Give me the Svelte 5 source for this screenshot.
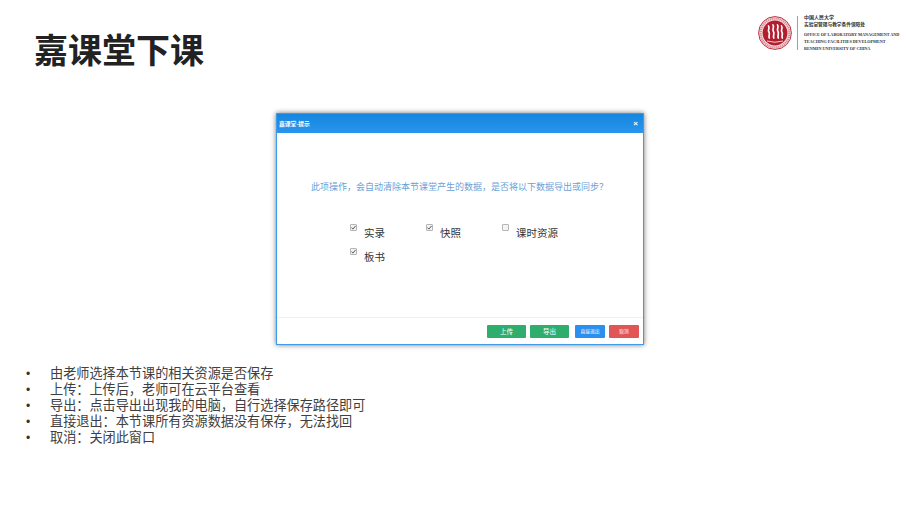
<script>
  const options = [
    { name: '实录', checked: true },
    { name: '快照', checked: true },
    { name: '课时资源', checked: false },
    { name: '板书', checked: true },
  ]

  const notes = [
    '由老师选择本节课的相关资源是否保存',
    '上传：上传后，老师可在云平台查看',
    '导出：点击导出出现我的电脑，自行选择保存路径即可',
    '直接退出：本节课所有资源数据没有保存，无法找回',
    '取消：关闭此窗口',
  ]
</script>

<main class="slide">
  <header class="top">
    <h1>嘉课堂下课</h1>
    <div class="logo">
      <svg class="seal" width="34" height="34" viewBox="0 0 34 34" aria-hidden="true">
        <circle cx="17" cy="17" r="16.4" fill="#f3dfe0" stroke="#c4303f" stroke-width="1" />
        <circle cx="17" cy="17" r="14.4" fill="none" stroke="#d88a92" stroke-width="2.2" stroke-dasharray="1.2 0.8" />
        <circle cx="17" cy="17" r="12.400" fill="#b01e30" />
        <path d="M10.500 10c1.800 2 -1.200 3.800 .4 6s-.8 3.400 .4 6M15 9c1.800 2 -1.200 4 .4 6.500s-.8 3.600 .4 6.500M19.500 9c1.800 2 -1.200 4 .4 6.500s-.8 3.600 .4 6.500M23.500 10c1.800 2 -1.200 3.800 .4 6s-.8 3.400 .4 6" fill="none" stroke="#fff" stroke-width="1.700" stroke-linecap="round" />
        <path d="M9 25q8 2.500 16 0" fill="none" stroke="#fff" stroke-width="0.800" />
      </svg>
      <div class="rule"></div>
      <div class="logo-text">
        <div class="cn1">中国人民大学</div>
        <div class="cn2">实验室管理与教学条件保障处</div>
        <div class="en">
          <div>OFFICE OF LABORATORY MANAGEMENT AND</div>
          <div>TEACHING FACILITIES DEVELOPMENT</div>
          <div>RENMIN UNIVERSITY OF CHINA</div>
        </div>
      </div>
    </div>
  </header>

  <section class="dialog">
    <div class="dialog-head">
      <span>嘉课堂-提示</span>
      <span class="close">×</span>
    </div>
    <div class="dialog-body">
      <p class="question">此项操作，会自动清除本节课堂产生的数据，是否将以下数据导出或同步？</p>
      <div class="options">
        {#each options as opt}
          <div class="option">
            <span class="box">
              {#if opt.checked}
                <svg width="7" height="7" viewBox="0 0 7 7" aria-hidden="true">
                  <path d="M1.500 3.600l1.400 1.500 2.700-3.200" fill="none" stroke="#555" stroke-width="1" />
                </svg>
              {/if}
            </span>
            <span class="label">{opt.name}</span>
          </div>
        {/each}
      </div>
    </div>
    <div class="dialog-foot">
      <button class="btn green">上传</button>
      <button class="btn green">导出</button>
      <button class="btn blue small">直接退出</button>
      <button class="btn red small">取消</button>
    </div>
  </section>

  <ul class="notes">
    {#each notes as note}
      <li>{note}</li>
    {/each}
  </ul>
</main>

<style>
  :global(body) {
    margin: 0;
    background: #fff;
  }

  .slide {
    width: 907px;
    height: 510px;
    overflow: hidden;
    font-family: "Liberation Sans", "Noto Sans CJK SC", sans-serif;
    color: #404040;
  }

  .top {
    display: flex;
    justify-content: space-between;
    align-items: flex-start;
    height: 113px;
    padding: 0 7px 0 35px;
    box-sizing: border-box;
  }

  h1 {
    margin: 29px 0 0 -1px;
    font-size: 34px;
    line-height: 40px;
    font-weight: 700;
    color: #222;
    font-family: "Noto Sans CJK SC", sans-serif;
  }

  .logo {
    display: flex;
    align-items: center;
    margin-top: 14px;
  }

  .seal {
    margin: 0 5px 0 0;
  }

  .rule {
    width: 1px;
    height: 34px;
    background: #c98a90;
    margin-right: 6px;
  }

  .logo-text {
    color: #333;
    width: 96px;
  }

  .cn1 {
    font-size: 5px;
    line-height: 7px;
    font-weight: 700;
  }

  .cn2 {
    font-size: 4.700px;
    line-height: 8px;
    font-weight: 700;
  }

  .en {
    margin-top: 2px;
    font-family: "Liberation Serif", serif;
    font-size: 4.200px;
    line-height: 7px;
    font-weight: 700;
    white-space: nowrap;
  }

  .dialog {
    width: 368px;
    height: 232px;
    margin: 0 0 0 276px;
    box-sizing: border-box;
    display: flex;
    flex-direction: column;
    background: #fff;
    border: 1px solid #3d9be9;
    box-shadow: 0 0 5px rgba(0, 0, 0, 0.55);
  }

  .dialog-head {
    height: 19px;
    display: flex;
    justify-content: space-between;
    align-items: center;
    padding: 0 5px 0 2px;
    background: linear-gradient(#1586e0, #2a95ec);
    color: #fff;
    font-size: 5.800px;
    font-weight: 700;
  }

  .close {
    font-size: 8px;
  }

  .dialog-body {
    flex: 1;
    border-bottom: 1px solid #f0f0f0;
  }

  .question {
    margin: 47px 0 0 -1px;
    text-align: center;
    font-size: 9px;
    line-height: 14px;
    color: #6a9fd8;
  }

  .options {
    display: flex;
    flex-wrap: wrap;
    width: 240px;
    margin: 29px 0 0 73px;
    row-gap: 4px;
  }

  .option {
    width: 76px;
    height: 20px;
    display: flex;
    align-items: flex-start;
    gap: 7px;
    font-size: 10.500px;
    line-height: 20px;
    color: #333;
  }

  .box {
    width: 7px;
    height: 7px;
    margin-top: 1px;
    box-sizing: border-box;
    border: 1px solid #b5b5b5;
    background: #f4f4f4;
    border-radius: 1px;
    display: flex;
    align-items: center;
    justify-content: center;
  }

  .box svg {
    flex: none;
  }

  .dialog-foot {
    height: 26px;
    display: flex;
    justify-content: flex-end;
    align-items: center;
    padding: 0 4px 0 0;
  }

  .btn {
    height: 13px;
    width: 39px;
    margin-left: 4px;
    padding: 0;
    border: none;
    border-radius: 1px;
    color: #fff;
    font-family: inherit;
    font-size: 6.500px;
    line-height: 13px;
  }

  .small {
    width: 30px;
    font-size: 4.800px;
  }

  .blue {
    margin-left: 6px;
  }

  .green {
    background: #2fad6d;
  }

  .blue {
    background: #2a8fee;
  }

  .red {
    background: #e25556;
  }

  .notes {
    list-style: none;
    margin: 21px 0 0 26px;
    padding: 0;
    font-size: 13.150px;
    line-height: 16px;
    color: #404040;
  }

  .notes li {
    display: flex;
  }

  .notes li::before {
    content: "•";
    width: 24px;
    font-size: 12px;
    color: #333;
  }
</style>
